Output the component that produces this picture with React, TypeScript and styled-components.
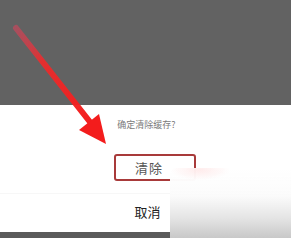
import styled, { createGlobalStyle } from "styled-components";

const Global = createGlobalStyle`
  html, body {
    margin: 0;
    padding: 0;
    background: #5e5e5e;
  }
  body {
    font-family: "Noto Sans CJK SC", "Noto Sans", sans-serif;
  }
`;

export default function App() {
  return (
    <Screen>
      <Global />
      <Dim />
      <Sheet>
        <Title>确定清除缓存?</Title>
        <ActionRow>
          <ConfirmButton>清除</ConfirmButton>
        </ActionRow>
        <Divider />
        <CancelRow>取消</CancelRow>
      </Sheet>
      <BottomBar />
      <Arrow viewBox="0 0 291 238">
        <defs>
          <linearGradient id="shaft" x1="16" y1="28" x2="92" y2="124" gradientUnits="userSpaceOnUse">
            <stop offset="0" stopColor="#e0405a" stopOpacity="0.55" />
            <stop offset="0.35" stopColor="#f02a2a" stopOpacity="0.9" />
            <stop offset="1" stopColor="#f31c1c" />
          </linearGradient>
        </defs>
        <line x1="16" y1="28" x2="90" y2="122" stroke="url(#shaft)" strokeWidth="6" strokeLinecap="round" />
        <polygon points="106,144 99,114 79,130" fill="#f31c1c" />
      </Arrow>
      <Watermark />
    </Screen>
  );
}

const Screen = styled.div`
  position: relative;
  width: 291px;
  height: 238px;
  display: flex;
  flex-direction: column;
  overflow: hidden;
`;

const Dim = styled.div`
  height: 105px;
  background: #626262;
`;

const Sheet = styled.div`
  height: 127px;
  background: #ffffff;
  display: flex;
  flex-direction: column;
  align-items: center;
`;

const Title = styled.div`
  margin-top: 14px;
  font-size: 9px;
  line-height: 12px;
  color: #7a7a7a;
  margin-left: 2px;
`;

const ActionRow = styled.div`
  margin-top: 23px;
  display: flex;
  justify-content: center;
  width: 100%;
`;

const ConfirmButton = styled.div`
  margin-left: 19px;
  box-sizing: border-box;
  height: 27px;
  width: 82px;
  padding: 0 0 0 19px;
  border: 2px solid #a83a3a;
  border-radius: 3px;
  font-size: 13px;
  line-height: 23px;
  color: #555555;
  letter-spacing: 1px;
`;

const Divider = styled.div`
  margin-top: 12px;
  width: 100%;
  height: 1px;
  background: #f7f7f7;
`;

const CancelRow = styled.div`
  margin-top: 9px;
  font-size: 13px;
  line-height: 18px;
  color: #222222;
  margin-left: 4px;
`;

const BottomBar = styled.div`
  flex: 1;
  background: #5a5a5a;
`;

const Arrow = styled.svg`
  position: absolute;
  left: 0;
  top: 0;
  width: 291px;
  height: 238px;
  pointer-events: none;
`;

const Watermark = styled.div`
  position: absolute;
  left: 170px;
  top: 168px;
  right: 0;
  bottom: 0;
  border-top-left-radius: 6px;
  background:
    radial-gradient(ellipse 30px 10px at 30px 2px, rgba(255, 200, 200, 0.35), transparent),
    linear-gradient(to bottom, rgba(255, 255, 255, 0.97) 0%, #fbfbfb 40%, #e4e4e4 72%, #c8c8c8 100%);
`;
